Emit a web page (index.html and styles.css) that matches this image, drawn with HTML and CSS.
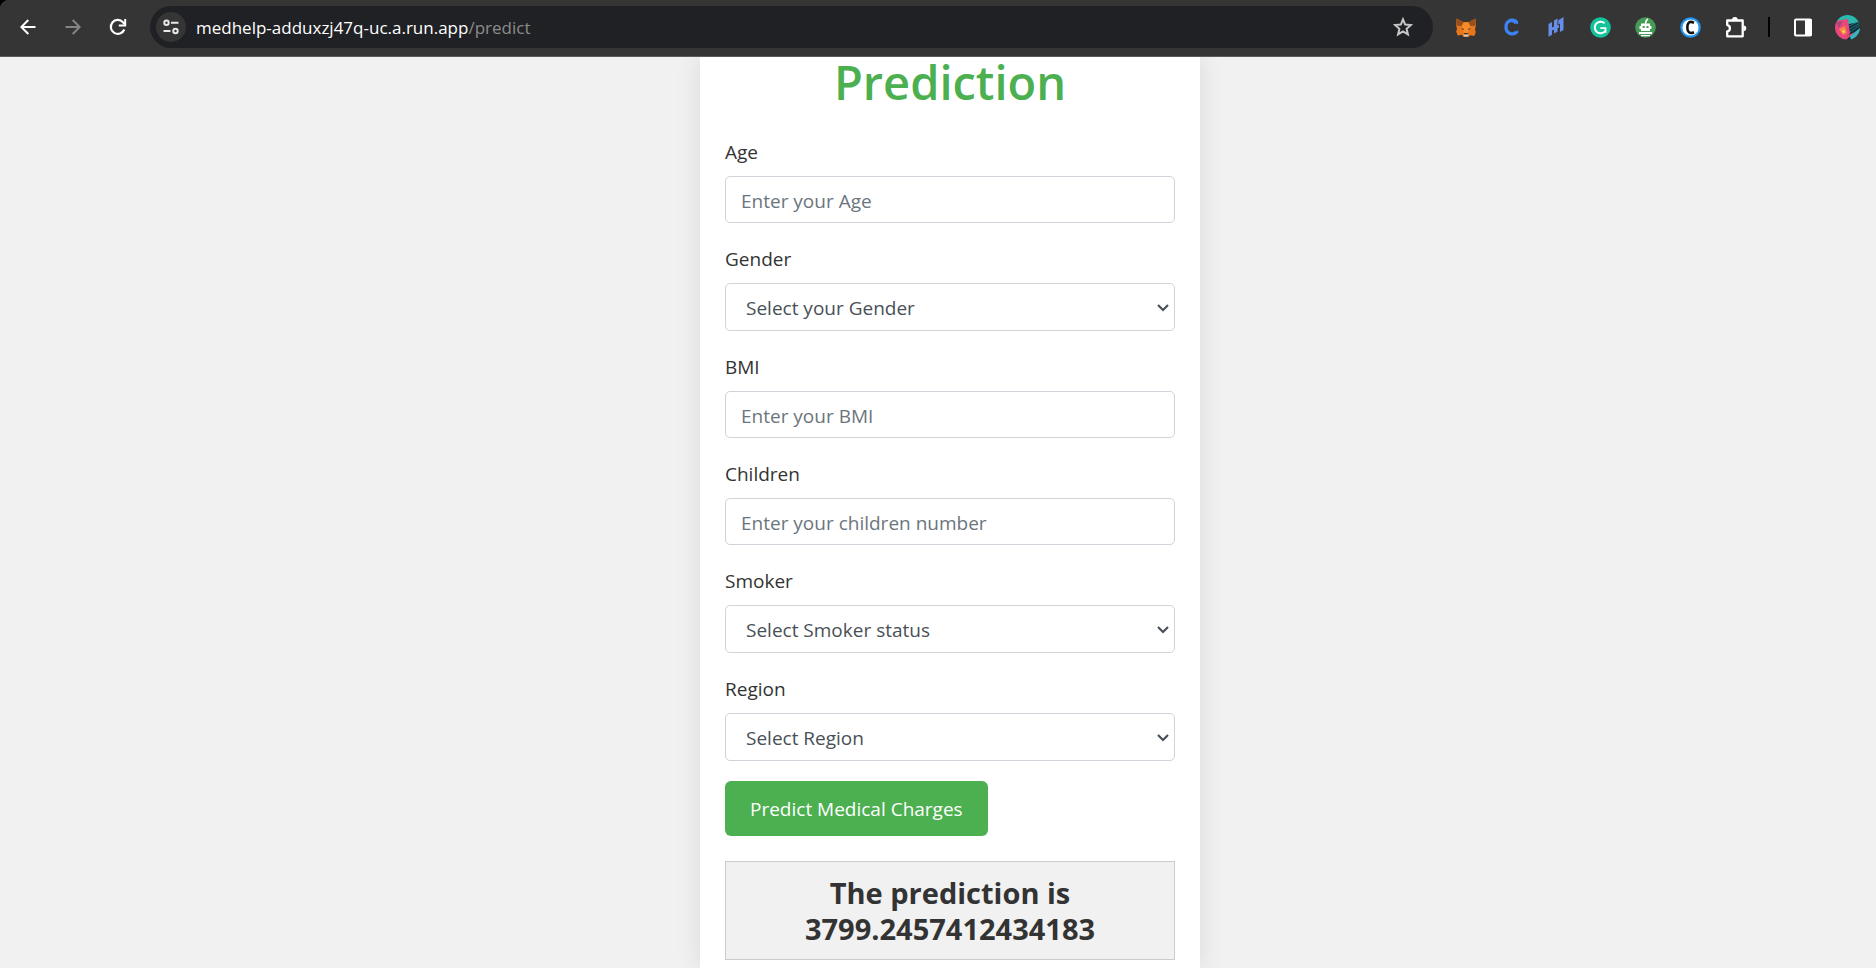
FILE: index.html
```html
<!DOCTYPE html>
<html lang="en">
<head>
<meta charset="utf-8">
<title>Prediction</title>
<link rel="stylesheet" href="styles.css">
</head>
<body>
<header class="toolbar">
  <nav class="nav" aria-label="Navigation">
    <button class="tool" type="button" aria-label="Back"><svg width="16" height="16" viewBox="0 0 16 16" fill="none" stroke="#fff" stroke-width="2"><path d="M15.500 8H1.500M8.300 1 1.300 8l7 7"/></svg></button>
    <button class="tool" type="button" aria-label="Forward" disabled><svg width="16" height="16" viewBox="0 0 16 16" fill="none" stroke="#858585" stroke-width="2"><path d="M.5 8h14M7.700 1l7 7-7 7"/></svg></button>
    <button class="tool" type="button" aria-label="Reload"><svg width="18" height="18" viewBox="0 0 18 18" fill="none" stroke="#fff" stroke-width="2.200"><path d="M15.300 11.500A7 7 0 1 1 14 4.200l1.500 1.700"/><path d="M16.200 1v6.500H9.800" stroke-width="2"/></svg></button>
  </nav>
  <div class="address">
    <button class="site" type="button" aria-label="Site information"><svg width="16" height="16" viewBox="0 0 16 16" fill="none" stroke="#e8e8e8" stroke-width="2"><circle cx="3.500" cy="3.800" r="2.200"/><path d="M8 3.800h7.500M.5 12h7"/><circle cx="12.500" cy="12" r="2.200"/></svg></button>
    <span class="url">medhelp-adduxzj47q-uc.a.run.app<span class="path">/predict</span></span>
    <button class="star" type="button" aria-label="Bookmark"><svg width="20" height="20" viewBox="0 0 20 20" fill="none" stroke="#c7c7c7" stroke-width="2"><path d="m10 2.300 2.200 5.300 5.700.5-4.300 3.700 1.300 5.600-4.900-3-4.900 3 1.300-5.600-4.300-3.700 5.700-.5z"/></svg></button>
  </div>
  <div class="extensions">
    <button class="tool" type="button" aria-label="Wallet"><svg width="20" height="19" viewBox="0 0 20 19"><path fill="#e8761b" d="m.5.500 6.500 3.500h6l6.500-3.500.3 7-.8 4 .8 2.500-1.500 4-4.300-.8-1.500 1.800H7.500L6 16.700l-4.300.8-1.500-4L1 11 .2 7.500z"/><path fill="#96501d" d="m.5.500 7 4L5.500 8 .7 7.800zM19.500.5l-7 4 2 3.500 4.800-.2z"/><path fill="#f68b29" d="M7.500 4.500h5L14 8l-2 7H8L6 8z"/><path fill="#2c3440" d="m5 10.500 3 .3-.6 1.300zM15 10.500l-3 .3.600 1.300zM8.200 15h3.600l.4 1.500H7.800z"/><path fill="#d8c5b5" d="M7.500 16.500h5l-.5 2H8z"/></svg></button>
    <button class="tool" type="button" aria-label="C extension"><svg width="16" height="18" viewBox="0 0 16 18" fill="none" stroke="#3d82f6"><path stroke-width="3.300" d="M13 5.500C11.500 1 3 1.500 3 9s8 8.500 10.500 4.500"/><path stroke-width="1.500" d="M5 2.500C8 .5 12 1 14.300 3.500V6M9 16.200c2 .3 4-.2 5.500-1.700v-2"/></svg></button>
    <button class="tool" type="button" aria-label="Stats"><svg width="16" height="20" viewBox="0 0 16 20" fill="#668eea"><path d="M.5 7 4 5v5.500l2-1V3.500L9.500 1.500v13L6 16.500v-4l-2 1v4.300L.5 19.800zM10.300 3.300 15.500 0v13L12 15V6.500l-1.700 1zM9 9l2-1v2.500l-2 1z"/></svg></button>
    <button class="tool" type="button" aria-label="Grammar"><svg width="21" height="21" viewBox="0 0 21 21" fill="none"><circle cx="10.500" cy="10.500" r="10.300" fill="#15c39a"/><path stroke="#fff" stroke-width="2" d="M14.500 6.200A5.800 5.800 0 1 0 15.200 14"/><path stroke="#fff" stroke-width="1.800" d="M10.300 11.200h5.200v4.500"/></svg></button>
    <button class="tool" type="button" aria-label="Robot"><svg width="21" height="21" viewBox="0 0 21 21"><circle cx="10.500" cy="10.500" r="10.300" fill="#459a55"/><path d="M10.500 7.500C10.500 4.500 11 3 13 2" stroke="#fff" stroke-width="1.600" fill="none"/><path fill="#fff" d="M6 6.500h9V9h1.500v3H15v2H6v-2H4.500V9H6z"/><path fill="#459a55" d="M7.700 9h2v2h-2zM11.500 9h2v2h-2z"/><path fill="#fff" d="M4 15h13v2H4zM6 18h9v1.300H6z"/></svg></button>
    <button class="tool" type="button" aria-label="Reader"><svg width="21" height="21" viewBox="0 0 21 21"><circle cx="10.500" cy="10.500" r="9.200" fill="#fff" stroke="#2196f3" stroke-width="2.200"/><path fill="none" stroke="#111" stroke-width="2.600" d="M14 5.800C9.500 3.500 7.300 6 7.300 10.500S9.500 17.200 14 15.200"/></svg></button>
    <button class="tool" type="button" aria-label="Extensions"><svg width="22" height="21" viewBox="0 0 22 21"><path fill="none" stroke="#fff" stroke-width="2.300" stroke-linejoin="round" d="M2.200 3.500h15.500v15.800H2.200v-4.800c3.600-.4 3.600-6 0-6.400z"/><path fill="#fff" d="M7 3a2.900 2.900 0 0 1 5.800 0zM18.500 8.500a2.800 2.800 0 0 1 0 5.600z"/></svg></button>
  </div>
  <div class="divider"></div>
  <div class="profile">
    <button class="tool" type="button" aria-label="Side panel"><svg width="18" height="19" viewBox="0 0 18 19"><rect x="1" y="1.500" width="16" height="16" rx="1" fill="none" stroke="#fff" stroke-width="2"/><path fill="#fff" d="M11 1h6.500v17H11z"/></svg></button>
    <button class="tool" type="button" aria-label="Profile"><svg class="avatar" width="25" height="25" viewBox="0 0 25 25"><path fill="#12303c" d="M0 0h25v25H0z"/><path fill="#2bb8ae" d="M3 0h16l6 7-11 2L5 8 1 5z"/><path fill="#e8467c" d="M0 6l13-2 2 14-5 7L0 22z"/><path fill="#f58a43" d="m4 14 6-3 2 7-4 2z"/><path fill="#f7dd4c" d="m7 16 2-1 1 2-2 1z"/><path fill="#a94775" d="m1 7 7-1-4 7z"/><path fill="#35b8bd" d="m15 21 10-8v8l-9 4z"/><path fill="#d94b70" d="m11 21 9-4-9 8z"/><path d="m14 11 11-5M15 14l10-6M15 17l10-7" stroke="#1f7078"/></svg></button>
  </div>
</header>
<main class="page">
  <section class="card">
    <h1 class="title">Prediction</h1>
    <form class="form">
      <label class="label" for="age">Age</label>
      <input class="control" id="age" type="text" placeholder="Enter your Age">
      <label class="label" for="gender">Gender</label>
      <select class="control select" id="gender"><option>Select your Gender</option></select>
      <label class="label" for="bmi">BMI</label>
      <input class="control" id="bmi" type="text" placeholder="Enter your BMI">
      <label class="label" for="children">Children</label>
      <input class="control" id="children" type="text" placeholder="Enter your children number">
      <label class="label" for="smoker">Smoker</label>
      <select class="control select" id="smoker"><option>Select Smoker status</option></select>
      <label class="label" for="region">Region</label>
      <select class="control select" id="region"><option>Select Region</option></select>
      <button class="submit" type="button">Predict Medical Charges</button>
    </form>
    <output class="result">The prediction is 3799.2457412434183</output>
  </section>
</main>
</body>
</html>
```
FILE: styles.css
```css
* { box-sizing: border-box; }
html { background: #f1f1f1; }
body {
  margin: 0;
  height: 100vh;
  display: flex;
  flex-direction: column;
  overflow: hidden;
  background: #f1f1f1;
  color: #333;
  font-family: "Segoe UI", "Open Sans", "Noto Sans", sans-serif;
  font-size: 19px;
}
button, input, select { font: inherit; }

.toolbar {
  position: relative;
  z-index: 1;
  display: flex;
  align-items: center;
  flex: none;
  height: 57px;
  padding: 0 6px 2px 5px;
  background: radial-gradient(circle at 10px 10px, #353535 10px, #000 11px) 0 0 / 10px 10px no-repeat, linear-gradient(#353535, #353535) 10px 0 no-repeat, linear-gradient(#353535, #353535) 0 10px no-repeat;
  border-bottom: 1px solid #5c5a5c;
}
.nav, .extensions, .profile { display: flex; }
.tool, .site, .star {
  display: flex;
  align-items: center;
  justify-content: center;
  padding: 0;
  border: 0;
  background: none;
}
.tool { width: 45px; height: 42px; }
.address {
  display: flex;
  flex: 1;
  align-items: center;
  height: 42px;
  margin: 0 10px;
  padding: 0 20px 0 6px;
  border-radius: 21px;
  background: #202124;
}
.site {
  width: 30px;
  height: 30px;
  border-radius: 50%;
  background: #353535;
}
.url {
  flex: 1;
  margin-left: 10px;
  color: #fff;
  font-size: 17px;
}
.path { color: #8c8c8c; }
.divider {
  width: 2px;
  height: 20px;
  margin: 0 10px;
  background: #000;
}
.avatar { border-radius: 50%; }

.page {
  display: flex;
  flex: 1;
  justify-content: center;
  min-height: 0;
  padding-left: 24px;
}
.card {
  flex: 0 1 500px;
  padding: 0 25px;
  background: #fff;
  box-shadow: 0 0 25px rgba(0, 0, 0, 0.1);
}
.title {
  margin: 0 0 29px;
  color: #4caf50;
  font-size: 47px;
  font-weight: 600;
  line-height: 50px;
  text-align: center;
}
.form {
  display: flex;
  flex-direction: column;
  align-items: stretch;
}
.label {
  margin-bottom: 8px;
  line-height: 32px;
}
.control {
  width: 100%;
  height: 47px;
  margin: 0 0 20px;
  padding: 2px 15px 0;
  border: 1px solid #ced4da;
  border-radius: 5px;
  background: #fff;
  color: #495057;
}
.control::placeholder { color: #6c757d; opacity: 1; }
.select {
  height: 48px;
  padding-left: 20px;
  appearance: none;
  background: #fff url("data:image/svg+xml,%3Csvg xmlns='http://www.w3.org/2000/svg' width='12' height='8' fill='none' stroke='%23495057' stroke-width='2.200'%3E%3Cpath d='M1 1l5 5 5-5'/%3E%3C/svg%3E") no-repeat right 5px top 20px;
}
.submit {
  align-self: flex-start;
  height: 55px;
  margin-bottom: 25px;
  padding: 0 25px;
  border: 0;
  border-radius: 6px;
  background: #4caf50;
  color: #fff;
}
.result {
  display: block;
  padding: 13px 25px 12px;
  border: 1px solid #ccc;
  background: #f1f1f1;
  font-size: 29px;
  font-weight: 700;
  line-height: 36px;
  text-align: center;
}
```
